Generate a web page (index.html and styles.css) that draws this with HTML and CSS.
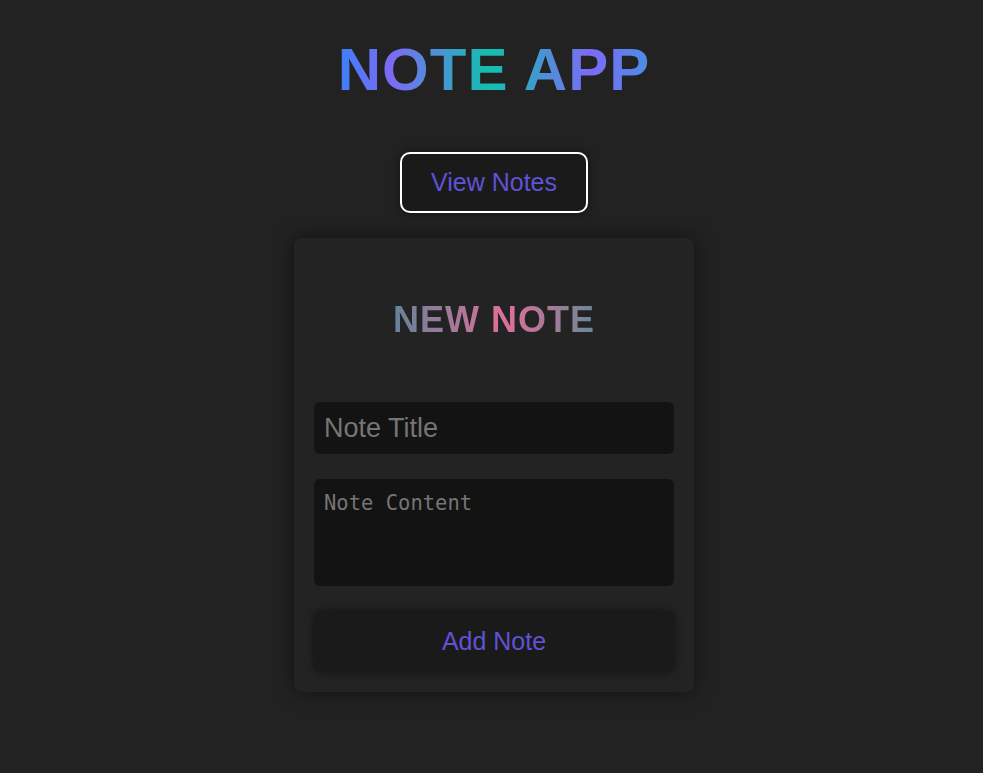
FILE: index.html
```html
<!DOCTYPE html>
<html>
<head>
<meta charset="utf-8">
<link rel="stylesheet" href="styles.css">
</head>
<body>
<div class="page">
  <h1 class="app-title">NOTE APP</h1>
  <button class="view-btn">View Notes</button>
  <div class="card">
    <h2 class="card-title">NEW NOTE</h2>
    <input class="title-input" type="text" placeholder="Note Title">
    <textarea class="content-input" placeholder="Note Content"></textarea>
    <button class="add-btn">Add Note</button>
  </div>
</div>
</body>
</html>
```

FILE: styles.css
```css
html, body {
  margin: 0;
  padding: 0;
  background: #222222;
  height: 100%;
}
body {
  font-family: "Liberation Sans", Arial, sans-serif;
}
.page {
  display: flex;
  flex-direction: column;
  align-items: center;
  padding: 35px 0 0 5px;
}
.app-title {
  margin: 0;
  font-size: 60px;
  font-weight: bold;
  letter-spacing: 1px;
  line-height: 69px;
  background: linear-gradient(90deg, #3d7ff7 0%, #7d6af6 17%, #12c0ae 49%, #7d6af6 81%, #4a8ee6 100%);
  -webkit-background-clip: text;
  background-clip: text;
  color: transparent;
}
.view-btn {
  margin-top: 48px;
  background: #1a1a1a;
  border: 2px solid #ffffff;
  border-radius: 10px;
  color: #5e52d6;
  font-family: "Liberation Sans", Arial, sans-serif;
  font-size: 25px;
  line-height: 29px;
  padding: 14px 29px;
  box-shadow: 0 0 10px rgba(0, 0, 0, 0.5);
  cursor: pointer;
}
.card {
  margin-top: 25px;
  width: 400px;
  box-sizing: border-box;
  padding: 20px;
  background: #232323;
  border-radius: 8px;
  box-shadow: 0 0 20px rgba(0, 0, 0, 0.5);
  display: flex;
  flex-direction: column;
}
.card-title {
  margin: 41px 0 62px;
  text-align: center;
  font-size: 36px;
  font-weight: bold;
  letter-spacing: 1px;
  line-height: 41px;
  background: linear-gradient(90deg, #62849a 0%, #e06f99 55%, #6a8799 100%);
  -webkit-background-clip: text;
  background-clip: text;
  color: transparent;
  align-self: center;
}
.title-input {
  box-sizing: border-box;
  width: 100%;
  height: 52px;
  background: #131313;
  border: none;
  border-radius: 6px;
  padding: 0 10px;
  font-family: "Liberation Sans", Arial, sans-serif;
  font-size: 27px;
  color: #ddd;
  outline: none;
}
.title-input::placeholder {
  color: #757575;
}
.content-input {
  box-sizing: border-box;
  width: 100%;
  height: 107px;
  margin-top: 25px;
  background: #131313;
  border: none;
  border-radius: 6px;
  padding: 12px 10px 10px;
  font-family: "DejaVu Sans Mono", monospace;
  font-size: 20.5px;
  color: #ddd;
  resize: none;
  outline: none;
}
.content-input::placeholder {
  color: #757575;
}
.add-btn {
  margin-top: 25px;
  height: 61px;
  background: #1a1a1a;
  border: none;
  border-radius: 8px;
  color: #5e52d6;
  font-family: "Liberation Sans", Arial, sans-serif;
  font-size: 25px;
  box-shadow: 0 0 10px rgba(0, 0, 0, 0.5);
  cursor: pointer;
}
```
